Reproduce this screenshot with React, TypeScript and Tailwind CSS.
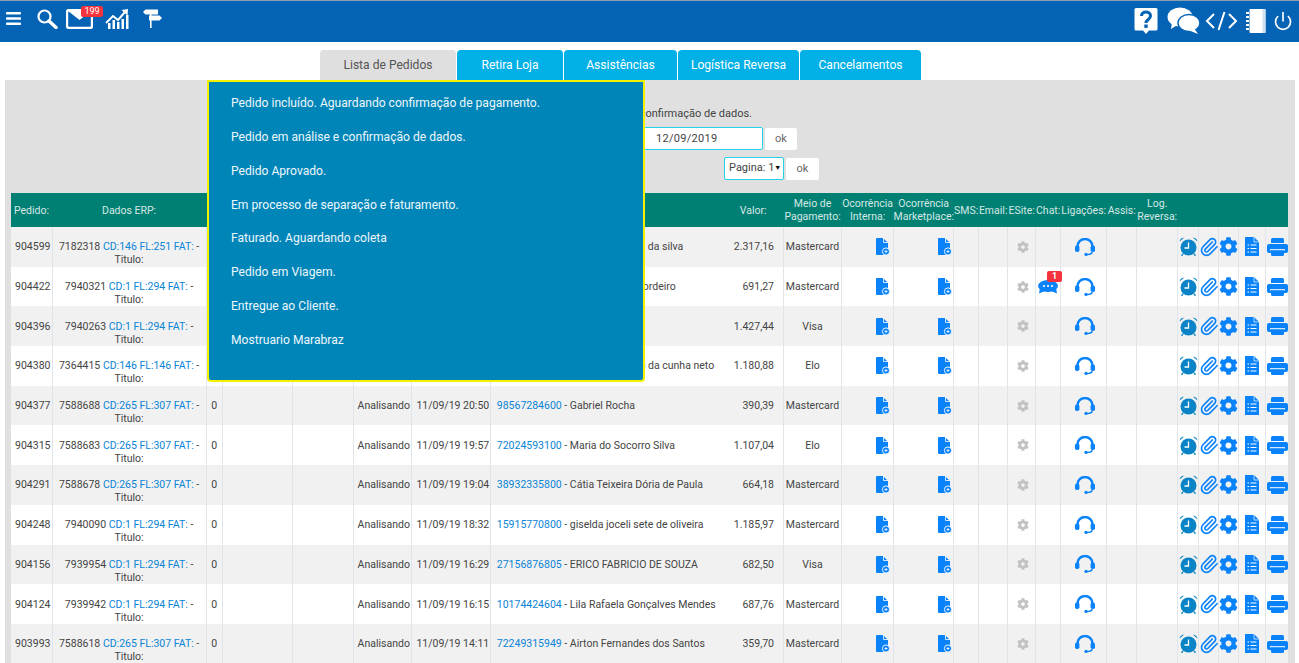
import React from "react";
import { FaBars, FaCog } from "react-icons/fa";
import { Paperclip, Power } from "lucide-react";

type Row = {
    id: string;
    erp: string;
    cd: string;
    date: string;
    cli: string;
    name: string;
    val: string;
    pay: string;
    chat?: boolean;
};

const rows: Row[] = [
    { id: "904599", erp: "7182318", cd: "CD:146 FL:251 FAT:", date: "11/09/19 22:14", cli: "31245678900", name: "Maria aparecida da silva", val: "2.317,16", pay: "Mastercard" },
    { id: "904422", erp: "7940321", cd: "CD:1 FL:294 FAT:", date: "11/09/19 21:40", cli: "20145873600", name: "Antonio Carlo Cordeiro", val: "691,27", pay: "Mastercard", chat: true },
    { id: "904396", erp: "7940263", cd: "CD:1 FL:294 FAT:", date: "11/09/19 21:22", cli: "11873456200", name: "Paulo Souza", val: "1.427,44", pay: "Visa" },
    { id: "904380", erp: "7364415", cd: "CD:146 FL:146 FAT:", date: "11/09/19 21:05", cli: "40982217600", name: "Francisco Pedro da cunha neto", val: "1.180,88", pay: "Elo" },
    { id: "904377", erp: "7588688", cd: "CD:265 FL:307 FAT:", date: "11/09/19 20:50", cli: "98567284600", name: "Gabriel Rocha", val: "390,39", pay: "Mastercard" },
    { id: "904315", erp: "7588683", cd: "CD:265 FL:307 FAT:", date: "11/09/19 19:57", cli: "72024593100", name: "Maria do Socorro Silva", val: "1.107,04", pay: "Elo" },
    { id: "904291", erp: "7588678", cd: "CD:265 FL:307 FAT:", date: "11/09/19 19:04", cli: "38932335800", name: "Cátia Teixeira Dória de Paula", val: "664,18", pay: "Mastercard" },
    { id: "904248", erp: "7940090", cd: "CD:1 FL:294 FAT:", date: "11/09/19 18:32", cli: "15915770800", name: "giselda joceli sete de oliveira", val: "1.185,97", pay: "Mastercard" },
    { id: "904156", erp: "7939954", cd: "CD:1 FL:294 FAT:", date: "11/09/19 16:29", cli: "27156876805", name: "ERICO FABRICIO DE SOUZA", val: "682,50", pay: "Visa" },
    { id: "904124", erp: "7939942", cd: "CD:1 FL:294 FAT:", date: "11/09/19 16:15", cli: "10174424604", name: "Lila Rafaela Gonçalves Mendes", val: "687,76", pay: "Mastercard" },
    { id: "903993", erp: "7588618", cd: "CD:265 FL:307 FAT:", date: "11/09/19 14:11", cli: "72249315949", name: "Airton Fernandes dos Santos", val: "359,70", pay: "Mastercard" },
];

const menu = [
    "Pedido incluído. Aguardando confirmação de pagamento.",
    "Pedido em análise e confirmação de dados.",
    "Pedido Aprovado.",
    "Em processo de separação e faturamento.",
    "Faturado. Aguardando coleta",
    "Pedido em Viagem.",
    "Entregue ao Cliente.",
    "Mostruario Marabraz",
];

const tabClass = "h-[30px] flex items-center justify-center rounded-t-[4px] text-[12.1px]";
const cellClass = "border-r border-[#dfe5ea] p-0 text-center align-middle";

const SearchIcon = () => (
    <svg width="21" height="20" viewBox="0 0 21 20" fill="none" stroke="#fff">
        <circle cx="7.5" cy="7.5" r="6" strokeWidth="2.2" />
        <path d="M12 12 L19 18.5" strokeWidth="3.4" strokeLinecap="round" />
    </svg>
);

const MailIcon = () => (
    <svg width="27" height="20" viewBox="0 0 27 20">
        <rect x="1" y="1" width="25" height="18" rx="2" fill="none" stroke="#fff" strokeWidth="2.4" />
        <path d="M2 2 L13.5 11 L25 2 Z" fill="#fff" />
    </svg>
);

const ChartIcon = () => (
    <svg width="25" height="22" viewBox="0 0 25 22" fill="#fff">
        <rect x="3" y="15" width="2.5" height="6" />
        <rect x="7.5" y="12" width="2.5" height="9" />
        <rect x="12" y="14" width="2.5" height="7" />
        <rect x="16.5" y="11" width="2.5" height="10" />
        <rect x="21" y="7" width="2.5" height="14" />
        <path d="M1 15 L8 8 L13 12 L20 4" fill="none" stroke="#fff" strokeWidth="2" />
        <path d="M16.5 2 L23 1 L22.5 7.5 Z" />
    </svg>
);

const SignIcon = () => (
    <svg width="19" height="19" viewBox="0 0 19 19" fill="#fff">
        <rect x="7" y="1" width="1.6" height="18" />
        <path d="M0 3 L2.5 .5 H15 V5.5 H2.5 Z" />
        <path d="M6 6.5 H16.5 L19 9 L16.5 11.5 H6 Z" />
    </svg>
);

const HelpIcon = () => (
    <svg width="24" height="28" viewBox="0 0 24 28">
        <path d="M2 1 H22 A1.5 1.5 0 0 1 23.5 2.5 V22 A1.5 1.5 0 0 1 22 23.5 H15 L12 27 L9 23.5 H2 A1.5 1.5 0 0 1 .5 22 V2.5 A1.5 1.5 0 0 1 2 1 Z" fill="#fff" />
        <path d="M7.5 9 C7.5 3.5 16.5 3.5 16.5 9 C16.5 12.5 12 12.5 12 16" fill="none" stroke="#0563b5" strokeWidth="3" />
        <rect x="10.3" y="17.5" width="3.4" height="3.4" fill="#0563b5" />
    </svg>
);

const BubblesIcon = () => (
    <svg width="34" height="27" viewBox="0 0 34 27">
        <ellipse cx="13" cy="10" rx="12.5" ry="9.5" fill="#fff" />
        <path d="M5 15 L4 22 L12 17 Z" fill="#fff" />
        <ellipse cx="22" cy="16" rx="11" ry="8.5" fill="#fff" stroke="#0563b5" strokeWidth="1.5" />
        <path d="M27 21 L31 27 L21 23 Z" fill="#fff" />
    </svg>
);

const CodeIcon = () => (
    <svg width="33" height="20" viewBox="0 0 33 20" fill="none" stroke="#fff" strokeWidth="2">
        <path d="M9 3 L2 10 L9 17" />
        <path d="M24 3 L31 10 L24 17" />
        <path d="M19.5 1 L13.5 19" />
    </svg>
);

const NotebookIcon = () => (
    <svg width="20" height="26" viewBox="0 0 20 26">
        <rect x="3.5" y="1" width="16" height="24" rx="1" fill="#fff" />
        <rect x="16.5" y="1" width="3" height="24" fill="#cfe0f0" />
        <path d="M0 5 H3 M0 9 H3 M0 13 H3 M0 17 H3 M0 21 H3" stroke="#fff" strokeWidth="2" />
    </svg>
);

const FilePlus = () => (
    <svg width="14" height="17" viewBox="0 0 14 17" className="mx-auto">
        <path d="M0 1 A1 1 0 0 1 1 0 H7 L12 5 V16 A1 1 0 0 1 11 17 H1 A1 1 0 0 1 0 16 Z" fill="#0a82fa" />
        <path d="M7.5 0 V4.5 H12" fill="none" stroke="#fff" strokeWidth="0.8" />
        <circle cx="10" cy="13.5" r="3.6" fill="#0a82fa" stroke="#fff" strokeWidth="0.9" />
        <path d="M8.5 13.5 H11.5 M10 12 V15" stroke="#fff" strokeWidth="0.8" />
    </svg>
);

const Headset = () => (
    <svg width="20" height="18" viewBox="0 0 20 18" className="mx-auto" fill="none">
        <path d="M2.5 10 V8.5 A7.5 7.5 0 0 1 17.5 8.5 V10" stroke="#0a82fa" strokeWidth="2.4" />
        <rect x="0" y="7.5" width="4.4" height="6.5" rx="1.8" fill="#0a82fa" />
        <rect x="15.6" y="7.5" width="4.4" height="6.5" rx="1.8" fill="#0a82fa" />
        <path d="M17 14 C17 16 14.5 16.5 12 16.5" stroke="#0a82fa" strokeWidth="1.5" />
        <circle cx="11" cy="16.4" r="1.6" fill="#0a82fa" />
    </svg>
);

const ChatIcon = () => (
    <span className="relative block w-[20px] h-[14px] mx-auto">
        <svg width="20" height="14" viewBox="0 0 20 14" className="block">
            <ellipse cx="10" cy="6" rx="10" ry="6" fill="#0a82fa" />
            <path d="M2 8 L1 13.5 L7 11 Z M18 8 L19 13.5 L13 11 Z" fill="#0a82fa" />
            <circle cx="6" cy="6" r="1.1" fill="#fff" />
            <circle cx="10" cy="6" r="1.1" fill="#fff" />
            <circle cx="14" cy="6" r="1.1" fill="#fff" />
        </svg>
        <span className="absolute -top-[9px] left-[9px] w-[15px] h-[11px] rounded-[2px] bg-[#f4333c] text-white text-[9px] leading-[11px] font-bold text-center">1</span>
    </span>
);

const AlarmIcon = () => (
    <svg width="19" height="19" viewBox="0 0 19 19" className="mx-auto">
        <circle cx="9.5" cy="10.5" r="8" fill="#0a84c6" />
        <path d="M.6 4.6 A4 4 0 0 1 5 .8 Z M18.4 4.6 A4 4 0 0 0 14 .8 Z" fill="#0a84c6" />
        <path d="M9.5 5.5 V11 H5.5" fill="none" stroke="#fff" strokeWidth="1.3" />
        <path d="M4 17 L2.5 18.7 M15 17 L16.5 18.7" stroke="#0a84c6" strokeWidth="1.4" />
    </svg>
);

const ListFile = () => (
    <svg width="14" height="19" viewBox="0 0 14 19" className="mx-auto">
        <path d="M0 0 H9 L14 5 V19 H0 Z" fill="#0a82fa" />
        <path d="M9 0 V5 H14" fill="none" stroke="#fff" strokeWidth="0.7" />
        <path d="M2.5 8 H4 M5.5 8 H11.5 M2.5 11.5 H4 M5.5 11.5 H11.5 M2.5 15 H4 M5.5 15 H11.5" stroke="#fff" strokeWidth="1.2" />
    </svg>
);

const PrinterIcon = () => (
    <svg width="21" height="18" viewBox="0 0 21 18" className="mx-auto">
        <path d="M4 5 V1.5 A1.5 1.5 0 0 1 5.5 0 H15.5 A1.5 1.5 0 0 1 17 1.5 V5 Z" fill="#0a82fa" />
        <rect x="0" y="6" width="21" height="9" rx="2" fill="#0a82fa" />
        <rect x="3" y="11.2" width="15" height="1.2" fill="#fff" />
        <path d="M4 12.4 H17 V16.5 A1.5 1.5 0 0 1 15.5 18 H5.5 A1.5 1.5 0 0 1 4 16.5 Z" fill="#0a82fa" />
    </svg>
);

const App: React.FC = () => {
    return (
        <div className="relative h-screen overflow-hidden bg-white font-['Roboto',sans-serif] text-[#444]">
            <header className="h-[42px] bg-[#0563b5] border-t border-[#8aa0b5] flex items-center justify-between pl-[5px] pr-[6px] text-white">
                <div className="flex items-center h-full pb-[6px]">
                    <FaBars className="w-[17px] h-[17px]" />
                    <span className="ml-[15px]"><SearchIcon /></span>
                    <span className="relative ml-[8px]">
                        <MailIcon />
                        <span className="absolute -top-[3px] left-[15px] w-[22px] h-[11px] rounded-[2px] bg-[#f4333c] text-[9px] leading-[11px] text-center">199</span>
                    </span>
                    <span className="ml-[12px]"><ChartIcon /></span>
                    <span className="ml-[13px]"><SignIcon /></span>
                </div>
                <div className="flex items-center h-full pb-[2px]">
                    <HelpIcon />
                    <span className="ml-[9px]"><BubblesIcon /></span>
                    <span className="ml-[4px]"><CodeIcon /></span>
                    <span className="ml-[8px]"><NotebookIcon /></span>
                    <Power className="w-[20px] h-[20px] ml-[7px]" strokeWidth={2} />
                </div>
            </header>

            <nav className="h-[38px] pt-[8px] pl-[320px] flex gap-[1px]">
                <div className={`${tabClass} w-[136px] bg-[#dfdfdf] text-[#555]`}>Lista de Pedidos</div>
                <div className={`${tabClass} w-[106px] bg-[#00b0e6] text-white`}>Retira Loja</div>
                <div className={`${tabClass} w-[113px] bg-[#00b0e6] text-white`}>Assistências</div>
                <div className={`${tabClass} w-[121px] bg-[#00b0e6] text-white`}>Logística Reversa</div>
                <div className={`${tabClass} w-[121px] bg-[#00b0e6] text-white`}>Cancelamentos</div>
            </nav>

            <main className="ml-[5px] mr-[4px] bg-[#e0e0e0] h-[583px] pl-[6px] pr-[7px]">
                <div className="h-[113px] pt-[27px] text-[11px]">
                    <div className="w-[741px] text-right h-[20px] leading-[13px] text-[#444]">Pedido em análise e confirmação de dados.</div>
                    <div className="w-[786px] flex justify-end items-center gap-[2px] h-[23px]">
                        <div className="w-[240px] h-[23px] bg-white border border-[#22d3e8] rounded-[2px] pl-[132px] text-[11px] leading-[21px] tracking-[0.3px]">12/09/2019</div>
                        <div className="w-[32px] h-[22px] bg-white rounded-[2px] text-center leading-[22px] text-[#666]">ok</div>
                    </div>
                    <div className="w-[808px] mt-[7px] flex justify-end items-center gap-[2px] h-[23px]">
                        <div className="w-[60px] h-[23px] bg-white border border-[#22d3e8] rounded-[2px] flex items-center justify-between pl-[4px] pr-[3px] whitespace-nowrap text-[#444]">
                            <span>Pagina: 1</span>
                            <span className="text-[7px] text-black">▼</span>
                        </div>
                        <div className="w-[33px] h-[22px] bg-white rounded-[2px] text-center leading-[22px] text-[#666]">ok</div>
                    </div>
                </div>

                <table className="table-fixed border-collapse w-[1277px] text-[10.5px] text-[#444]">
                    <thead>
                        <tr className="h-[34px] bg-[#008073] text-[#d5e8e5] leading-[13px] font-normal">
                            <th className="w-[41px] font-normal p-0">Pedido:</th>
                            <th className="w-[154px] font-normal p-0">Dados ERP:</th>
                            <th className="w-[16px] p-0"></th>
                            <th className="w-[70px] p-0"></th>
                            <th className="w-[61px] p-0"></th>
                            <th className="w-[58px] p-0"></th>
                            <th className="w-[79px] p-0"></th>
                            <th className="w-[243px] p-0"></th>
                            <th className="w-[50px] font-normal p-0 text-right pr-[17px]">Valor:</th>
                            <th className="w-[58px] font-normal p-0">Meio de<br />Pagamento:</th>
                            <th className="w-[52px] font-normal p-0">Ocorrência<br />Interna:</th>
                            <th className="w-[60px] font-normal p-0">Ocorrência<br />Marketplace:</th>
                            <th className="w-[25px] font-normal p-0">SMS:</th>
                            <th className="w-[29px] font-normal p-0">Email:</th>
                            <th className="w-[28px] font-normal p-0">ESite:</th>
                            <th className="w-[25px] font-normal p-0">Chat:</th>
                            <th className="w-[46px] font-normal p-0">Ligações:</th>
                            <th className="w-[30px] font-normal p-0">Assis:</th>
                            <th className="w-[41px] font-normal p-0">Log.<br />Reversa:</th>
                            <th className="w-[21px] p-0"></th>
                            <th className="w-[20px] p-0"></th>
                            <th className="w-[20px] p-0"></th>
                            <th className="w-[27px] p-0"></th>
                            <th className="w-[22px] p-0"></th>
                        </tr>
                    </thead>
                    <tbody>
                        {rows.map((r, i) => (
                            <tr key={r.id} className={`h-[39.7px] leading-[13px] ${i % 2 === 0 ? "bg-[#f1f1f1]" : "bg-white"}`}>
                                <td className={`${cellClass} pl-[3px]`}>{r.id}</td>
                                <td className={`${cellClass} pt-[13px]`}>
                                    {r.erp} <span className="text-[#0a84d6]">{r.cd}</span> -<br />Titulo:
                                </td>
                                <td className={cellClass}>0</td>
                                <td className={cellClass}></td>
                                <td className={cellClass}></td>
                                <td className={`${cellClass} pl-[3px]`}>Analisando</td>
                                <td className={`${cellClass} pl-[4px]`}>{r.date}</td>
                                <td className="p-0 align-middle text-left pl-[6px] whitespace-nowrap overflow-hidden">
                                    <span className="text-[#0a84d6]">{r.cli}</span> - {r.name}
                                </td>
                                <td className={`${cellClass} text-right pr-[9px]`}>{r.val}</td>
                                <td className={cellClass}>{r.pay}</td>
                                <td className={`${cellClass} pl-[31px]`}><FilePlus /></td>
                                <td className={`${cellClass} pl-[42px]`}><FilePlus /></td>
                                <td className={cellClass}></td>
                                <td className={cellClass}></td>
                                <td className={`${cellClass} pl-[3px]`}><FaCog className="w-[12px] h-[12px] mx-auto text-[#c2c2c2]" /></td>
                                <td className={cellClass}>{r.chat && <ChatIcon />}</td>
                                <td className={`${cellClass} pl-[2px]`}><Headset /></td>
                                <td className={cellClass}></td>
                                <td className={cellClass}></td>
                                <td className={cellClass}><AlarmIcon /></td>
                                <td className={cellClass}><Paperclip className="w-[20px] h-[20px] mx-auto text-[#0a82fa]" strokeWidth={2} /></td>
                                <td className={cellClass}><FaCog className="w-[19px] h-[19px] mx-auto text-[#0a82fa]" /></td>
                                <td className={cellClass}><ListFile /></td>
                                <td className="p-0 text-center align-middle"><PrinterIcon /></td>
                            </tr>
                        ))}
                    </tbody>
                </table>
            </main>

            {/* status dropdown, lies over the filters and the table */}
            <div className="absolute left-[207px] top-[80px] w-[438px] h-[302px] bg-[#0085b9] border-2 border-[#f5f000] rounded-bl-[4px] rounded-br-[4px] pt-[4px] pl-[22px] text-[12.1px] text-[#eef7fb]">
                {menu.map((m) => (
                    <div key={m} className="h-[33.9px] flex items-center">{m}</div>
                ))}
            </div>
        </div>
    );
};

export default App;
